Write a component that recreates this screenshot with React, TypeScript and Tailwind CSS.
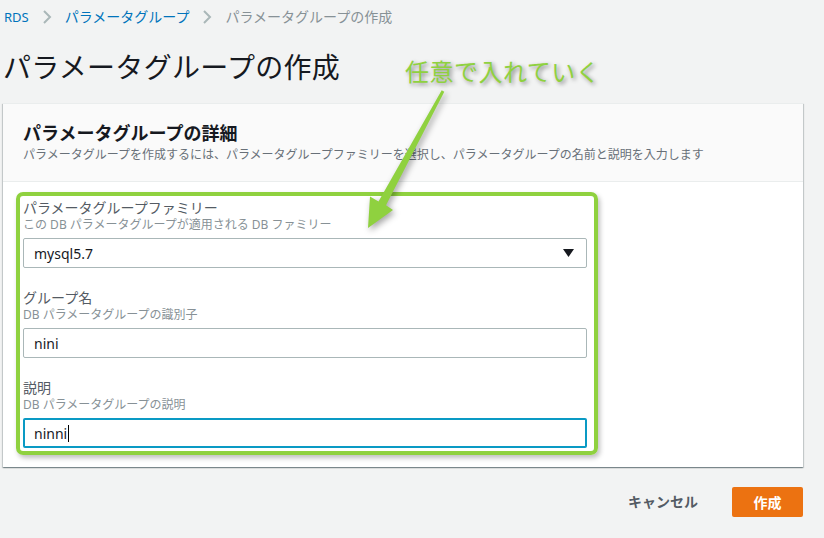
import React from "react";

const font = { fontFamily: '"Noto Sans", "Noto Sans CJK JP", sans-serif' };

function Chevron() {
  return (
    <svg width="10" height="16" viewBox="0 0 10 16" className="mx-[13px] shrink-0">
      <path d="M2 2 L8 8 L2 14" fill="none" stroke="#aab7b8" strokeWidth="2" />
    </svg>
  );
}

function Field({
  label,
  sub,
  children,
  className = "",
}: {
  label: string;
  sub: string;
  children: React.ReactNode;
  className?: string;
}) {
  return (
    <div className={"flex flex-col " + className}>
      <div className="text-[14px] leading-[18px] text-[#545b64]">{label}</div>
      <div className="text-[12px] leading-[16px] text-[#879196]">{sub}</div>
      {children}
    </div>
  );
}

export default function App() {
  return (
    <div
      className="relative w-[824px] h-[538px] overflow-hidden bg-[#f2f3f3] pl-[3px] pr-[21px] pt-[7px]"
      style={font}
    >
      {/* breadcrumb */}
      <div className="flex items-center h-[20px] text-[14px] leading-[20px] pl-px">
        <span className="text-[#0073bb] text-[13px]">RDS</span>
        <Chevron />
        <span className="text-[#0073bb]">パラメータグループ</span>
        <Chevron />
        <span className="text-[#879196]">パラメータグループの作成</span>
      </div>

      {/* title */}
      <h1 className="mt-[22px] text-[28px] leading-[36px] text-[#16191f] font-normal tracking-[0.3px]">
        パラメータグループの作成
      </h1>

      {/* card */}
      <div className="mt-[18px] bg-white border-t border-[#eaeded] shadow-[0_1px_1px_0_rgba(0,28,36,0.3),1px_1px_1px_0_rgba(0,28,36,0.15),-1px_1px_1px_0_rgba(0,28,36,0.15)]">
        <div className="bg-[#fafafa] border-b border-[#eaeded] px-[20px] pt-[17px] pb-[17px]">
          <div className="text-[18px] leading-[24px] font-bold text-[#16191f]">
            パラメータグループの詳細
          </div>
          <div className="mt-px text-[12px] leading-[18px] text-[#687078]">
            パラメータグループを作成するには、パラメータグループファミリーを選択し、パラメータグループの名前と説明を入力します
          </div>
        </div>
        <div className="pl-[13px] pt-[10px] pb-[12px]">
          <div className="w-[582px] border-[4px] border-[#8fd13f] rounded-[7px] pl-[3px] pr-[7px] pt-[3px] pb-[3px] shadow-[2px_3px_5px_rgba(0,0,0,0.25)]">
            <Field label="パラメータグループファミリー" sub="この DB パラメータグループが適用される DB ファミリー">
              <div className="mt-[5px] h-[30px] border border-[#aab7b8] rounded-[2px] flex items-center justify-between pl-[10px] pr-[12px] text-[14px] text-[#16191f]">
                <span>mysql5.7</span>
                <svg width="11" height="8" viewBox="0 0 11 8">
                  <path d="M0 0 L11 0 L5.5 8 Z" fill="#16191f" />
                </svg>
              </div>
            </Field>
            <Field className="mt-[21px]" label="グループ名" sub="DB パラメータグループの識別子">
              <div className="mt-[5px] h-[30px] border border-[#aab7b8] rounded-[2px] flex items-center pl-[10px] text-[14px] text-[#16191f]">
                nini
              </div>
            </Field>
            <Field className="mt-[21px]" label="説明" sub="DB パラメータグループの説明">
              <div className="mt-[5px] h-[30px] border-2 border-[#0a9ac4] rounded-[2px] flex items-center pl-[9px] text-[14px] text-[#16191f]">
                <span>ninni</span>
                <span className="ml-px w-px h-[17px] bg-black" />
              </div>
            </Field>
          </div>
        </div>
      </div>

      {/* footer */}
      <div className="mt-[20px] flex justify-end items-center">
        <button className="text-[14px] font-bold text-[#545b64] mr-[34px] leading-[30px]">
          キャンセル
        </button>
        <button className="w-[71px] h-[30px] rounded-[2px] bg-[#ec7211] text-white text-[14px] font-bold">
          作成
        </button>
      </div>

      {/* annotation overlay */}
      <div
        className="absolute left-[405px] top-[55px] text-[24px] leading-[34px] text-[#8fd13f] whitespace-nowrap tracking-[0.5px]"
        style={{ textShadow: "2px 2px 4px rgba(0,0,0,0.45)" }}
      >
        任意で入れていく
      </div>
      <svg
        className="absolute left-0 top-0 pointer-events-none"
        width="824"
        height="538"
        style={{ filter: "drop-shadow(2px 3px 3px rgba(0,0,0,0.35))" }}
      >
        <polygon
          points="441.7,90.3 444.3,91.7 386,205.3 393,210 368,228 370,196.5 378.5,201.5"
          fill="#8fd13f"
        />
      </svg>
    </div>
  );
}
